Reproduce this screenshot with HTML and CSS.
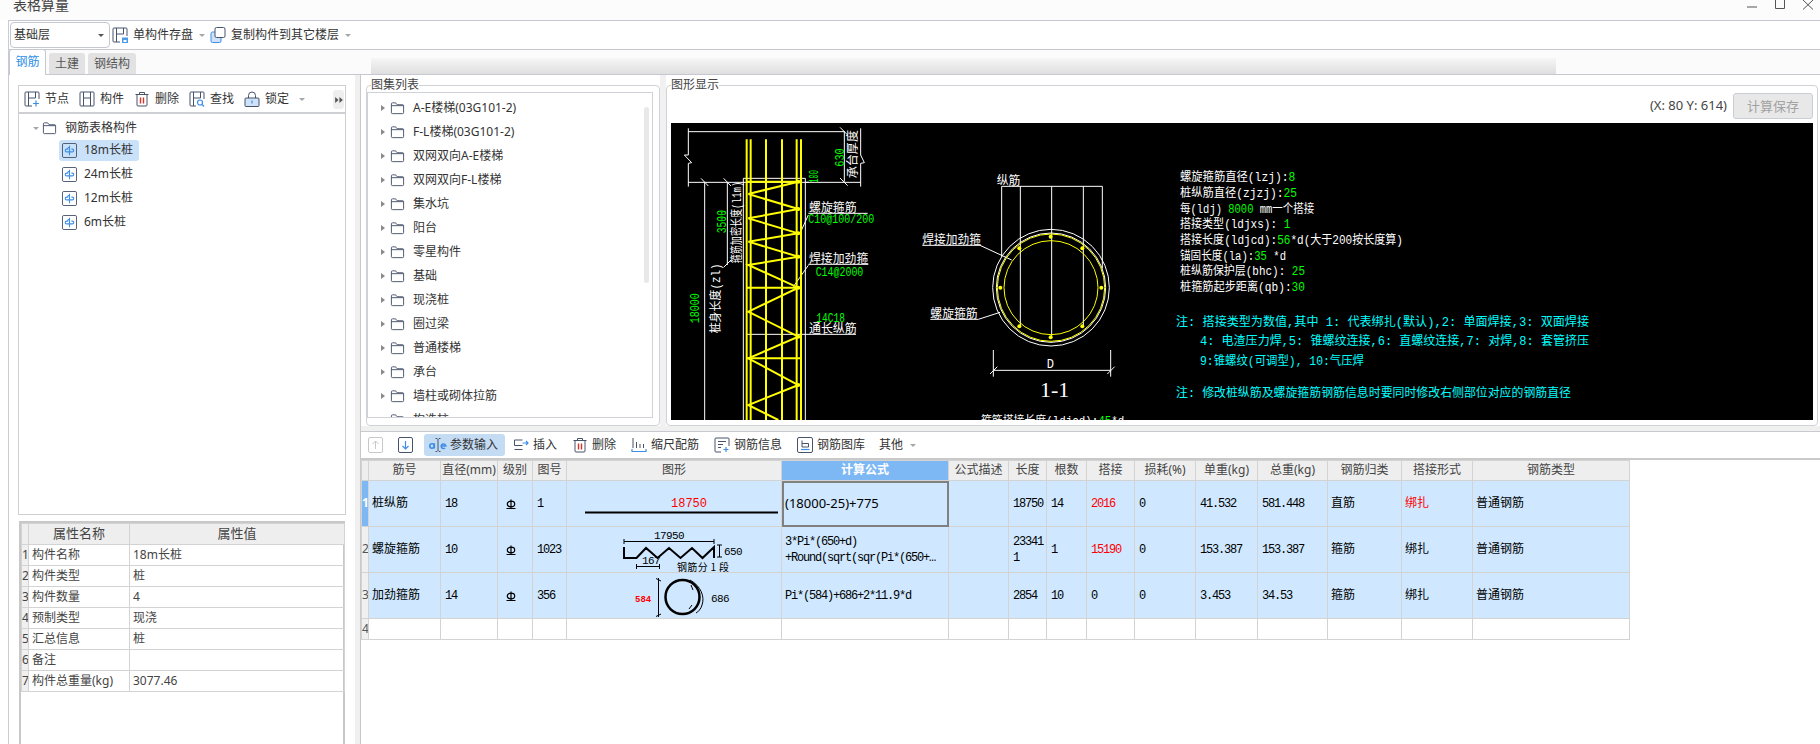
FILE: index.html
```html
<!DOCTYPE html>
<html lang="zh-CN">
<head>
<meta charset="utf-8">
<title>表格算量</title>
<link rel="stylesheet" href="styles.css">
</head>
<body>
<svg class="sprite" aria-hidden="true">
  <symbol id="i-node" viewBox="0 0 16 16"><path class="s" d="M8 15H2a1 1 0 0 1-1-1V2a1 1 0 0 1 1-1h12a1 1 0 0 1 1 1v6M4.500 1v14M11.500 1v6M4.500 7h7"/><path class="b" d="M12 9.500v6M9 12.500h6"/></symbol>
  <symbol id="i-comp" viewBox="0 0 16 16"><rect class="s" x="1" y="1" width="14" height="14" rx="1"/><path class="s" d="M4.500 1v14M11.500 1v14M4.500 7h7"/></symbol>
  <symbol id="i-del" viewBox="0 0 16 16"><path class="s" d="M1.500 3.500h13M5.500 3V1.500h5V3M3 3.500v10.500a1 1 0 0 0 1 1h8a1 1 0 0 0 1-1V3.500"/><path class="r" d="M6.500 6.500v6M9.500 6.500v6"/></symbol>
  <symbol id="i-find" viewBox="0 0 16 16"><path class="s" d="M7 15H2a1 1 0 0 1-1-1V2a1 1 0 0 1 1-1h12a1 1 0 0 1 1 1v6M4.500 1v14M11.500 1v6M4.500 7h7"/><circle class="b" cx="11" cy="11.500" r="2.500"/><path class="b" d="M13 13.500l2 2"/></symbol>
  <symbol id="i-lock" viewBox="0 0 16 16"><path class="s" d="M4.500 7V4.500a3.500 3.500 0 0 1 7 0V7"/><rect x="1" y="7" width="14" height="8.500" rx="1" fill="#cfe2fa" stroke="#47536b"/><path class="b" d="M8 9.500v3"/></symbol>
  <symbol id="i-save" viewBox="0 0 16 16"><path class="s" d="M8 15H2a1 1 0 0 1-1-1V2a1 1 0 0 1 1-1h12a1 1 0 0 1 1 1v7M4.500 1v14M11.500 1v6M4.500 7h7"/><rect x="10" y="10.500" width="6" height="5.500" fill="#4d9be8"/><rect x="11.500" y="13" width="3" height="2" fill="#fff"/></symbol>
  <symbol id="i-copy" viewBox="0 0 16 16"><rect x="1" y="5" width="10" height="10.500" rx="1.500" fill="#cfe2fa" stroke="#3d8ee6"/><rect x="5" y=".5" width="10" height="10" rx="1.500" fill="#fff" stroke="#47536b"/></symbol>
  <symbol id="i-folder" viewBox="0 0 16 14"><path class="s" d="M1.500 12V2.500a1 1 0 0 1 1-1h3.500l1.500 2h6a1 1 0 0 1 1 1V12a1 1 0 0 1-1 1h-11a1 1 0 0 1-1-1zM1.500 4.500h13"/></symbol>
  <symbol id="i-pile" viewBox="0 0 16 16"><rect class="s" x=".5" y=".5" width="15" height="15" rx="1.500"/><path class="b" d="M8 3v10M8 4.500C6.500 4.500 6 5.500 6 6.500H5a1.500 1.500 0 0 0 0 3h6a1.500 1.500 0 0 0 0-3h-1"/></symbol>
  <symbol id="i-up" viewBox="0 0 16 16"><rect x=".5" y=".5" width="14" height="15" rx="1.500" fill="none" stroke="#c8c8c8"/><path d="M7.500 12V4M4.500 7l3-3 3 3" fill="none" stroke="#c8c8c8"/></symbol>
  <symbol id="i-down" viewBox="0 0 16 16"><rect class="s" x=".5" y=".5" width="14" height="15" rx="1.500"/><path class="b" d="M7.500 4v8M4.500 9l3 3 3-3"/></symbol>
  <symbol id="i-param" viewBox="0 0 18 16"><path class="s" d="M6.500 1.500H8l1 1 1-1h1.500M9 2.500v11M6.500 14.500H8l1-1 1 1h1.500"/><circle class="bb" cx="3" cy="9" r="2.200"/><path class="bb" d="M5.300 6.300v5.200"/><path class="bb" d="M12.500 9h4.300a2.300 2.300 0 1 0-.8 2"/></symbol>
  <symbol id="i-insert" viewBox="0 0 16 16"><path class="s" d="M9.500 3H1.500v5.500h8M1.500 12.500h8"/><path class="b" d="M9.500 6h5.500M13 4l2 2-2 2"/></symbol>
  <symbol id="i-scale" viewBox="0 0 16 16"><path class="s" d="M2 1v10M5.500 5v6M9 7v4M12.500 7v4"/><path class="b" d="M1 12v2.500h14V12"/></symbol>
  <symbol id="i-info" viewBox="0 0 16 16"><path class="s" d="M7 15H2a1 1 0 0 1-1-1V2a1 1 0 0 1 1-1h12a1 1 0 0 1 1 1v7M4 4.500h8M4 7.500h5M4 10.500h3"/><path class="b" d="M12 10v5M9.500 12.500h5"/></symbol>
  <symbol id="i-lib" viewBox="0 0 16 16"><rect class="s" x=".5" y=".5" width="15" height="15" rx="1.500"/><path class="s" d="M5 3.500v6.500h6.500V6.500H5"/><path class="b" d="M4 12.500h8.500"/></symbol>
  <symbol id="i-grade" viewBox="0 0 10 10"><path d="M5 .5v8.500M1.300 5a3.700 2.800 0 0 1 7.400 0 3.700 2.800 0 0 1-7.400 0M.5 9.500h9" fill="none" stroke="#000" stroke-width="1.200"/></symbol>
  <symbol id="i-more" viewBox="0 0 9 7"><path d="M0 0l4 3.500L0 7zM5 0l4 3.500L5 7z" fill="#555"/></symbol>
</svg>

<header class="titlebar">
  <span class="title">表格算量</span>
  <div class="winctl">
    <svg class="wbtn" viewBox="0 0 10 10"><path d="M0 7h10"/></svg>
    <svg class="wbtn" viewBox="0 0 10 10"><path d="M.5 0v8.500h9V0"/></svg>
    <svg class="wbtn" viewBox="0 0 10 10"><path d="M0 0l10 9.500M10 0L0 9.500"/></svg>
  </div>
</header>

<div class="shell">
  <div class="topbar">
    <div class="select"><span>基础层</span><i class="caret dark"></i></div>
    <svg class="ico16 ml2"><use href="#i-save"/></svg><span class="tbt ml5">单构件存盘</span><i class="caret ml6"></i>
    <svg class="ico16 ml5"><use href="#i-copy"/></svg><span class="tbt ml5">复制构件到其它楼层</span><i class="caret ml6"></i>
  </div>
  <div class="tabs">
    <span class="tab active">钢筋</span><span class="tab">土建</span><span class="tab">钢结构</span>
  </div>
  <main class="work">
    <section class="left">
      <div class="lefttop">
        <div class="ltools">
          <svg class="ico16"><use href="#i-node"/></svg><span class="tbt tl">节点</span>
          <svg class="ico16"><use href="#i-comp"/></svg><span class="tbt tl">构件</span>
          <svg class="ico16"><use href="#i-del"/></svg><span class="tbt tl">删除</span>
          <svg class="ico16"><use href="#i-find"/></svg><span class="tbt tl">查找</span>
          <svg class="ico16"><use href="#i-lock"/></svg><span class="tbt tl">锁定</span>
          <i class="caret"></i>
          <span class="more"><svg class="more-ico"><use href="#i-more"/></svg></span>
        </div>
        <div class="tree">
          <div class="root"><i class="caret"></i><svg class="folder"><use href="#i-folder"/></svg><span>钢筋表格构件</span></div>
          <div class="leaf sel"><svg class="ico15"><use href="#i-pile"/></svg><span>18m长桩</span></div>
          <div class="leaf"><svg class="ico15"><use href="#i-pile"/></svg><span>24m长桩</span></div>
          <div class="leaf"><svg class="ico15"><use href="#i-pile"/></svg><span>12m长桩</span></div>
          <div class="leaf"><svg class="ico15"><use href="#i-pile"/></svg><span>6m长桩</span></div>
        </div>
      </div>
      <div class="props">
        <table class="ptable">
          <colgroup><col class="pc0"><col class="pc1"><col class="pc2"></colgroup>
          <thead><tr><th></th><th>属性名称</th><th>属性值</th></tr></thead>
          <tbody>
            <tr><td class="n">1</td><td>构件名称</td><td>18m长桩</td></tr>
            <tr><td class="n">2</td><td>构件类型</td><td>桩</td></tr>
            <tr><td class="n">3</td><td>构件数量</td><td>4</td></tr>
            <tr><td class="n">4</td><td>预制类型</td><td>现浇</td></tr>
            <tr><td class="n">5</td><td>汇总信息</td><td>桩</td></tr>
            <tr><td class="n">6</td><td>备注</td><td></td></tr>
            <tr><td class="n">7</td><td>构件总重量(kg)</td><td>3077.46</td></tr>
          </tbody>
        </table>
      </div>
    </section>
    <div class="splitter"></div>
    <section class="right">
      <div class="upper">
        <div class="group g1">
          <span class="legend">图集列表</span>
          <div class="atlas">
            <div class="arow"><i class="tri"></i><svg class="folder"><use href="#i-folder"/></svg><span>A-E楼梯(03G101-2)</span></div>
            <div class="arow"><i class="tri"></i><svg class="folder"><use href="#i-folder"/></svg><span>F-L楼梯(03G101-2)</span></div>
            <div class="arow"><i class="tri"></i><svg class="folder"><use href="#i-folder"/></svg><span>双网双向A-E楼梯</span></div>
            <div class="arow"><i class="tri"></i><svg class="folder"><use href="#i-folder"/></svg><span>双网双向F-L楼梯</span></div>
            <div class="arow"><i class="tri"></i><svg class="folder"><use href="#i-folder"/></svg><span>集水坑</span></div>
            <div class="arow"><i class="tri"></i><svg class="folder"><use href="#i-folder"/></svg><span>阳台</span></div>
            <div class="arow"><i class="tri"></i><svg class="folder"><use href="#i-folder"/></svg><span>零星构件</span></div>
            <div class="arow"><i class="tri"></i><svg class="folder"><use href="#i-folder"/></svg><span>基础</span></div>
            <div class="arow"><i class="tri"></i><svg class="folder"><use href="#i-folder"/></svg><span>现浇桩</span></div>
            <div class="arow"><i class="tri"></i><svg class="folder"><use href="#i-folder"/></svg><span>圈过梁</span></div>
            <div class="arow"><i class="tri"></i><svg class="folder"><use href="#i-folder"/></svg><span>普通楼梯</span></div>
            <div class="arow"><i class="tri"></i><svg class="folder"><use href="#i-folder"/></svg><span>承台</span></div>
            <div class="arow"><i class="tri"></i><svg class="folder"><use href="#i-folder"/></svg><span>墙柱或砌体拉筋</span></div>
            <div class="arow"><i class="tri"></i><svg class="folder"><use href="#i-folder"/></svg><span>构造柱</span></div>
            <div class="scroll"></div>
          </div>
        </div>
        <div class="vsplit"></div>
        <div class="group g2">
          <span class="legend">图形显示</span>
          <div class="ghead"><span class="coord">(X: 80 Y: 614)</span><span class="calc">计算保存</span></div>
          <svg class="cad" viewBox="18 39 3426 891">
            <rect x="18" y="39" width="3426" height="891" fill="#000"/>
            <g class="lw">
              <path d="M70 55V135L58 135 80 158 70 160V230M70 65H540M70 217H587M587 55V135L598 158 587 160V230M538 65V215M525 52L548 75M525 204L548 227"/>
              <path d="M235 930V205H421V930M421 217H432M119 217V930M187 217V465M108 205L130 228M176 205L198 228M176 472L198 450"/>
              <path d="M430 310H608M430 315L405 370M430 463H610M430 466L385 530M245 673H573"/>
              <path d="M772 406H945L1040 450M796 628H940L1005 607M1010 229H1312M1010 229V440M1066 229V650M1160 229V680M1255 229V650M1312 229V475"/>
              <path d="M985 720V800M1337 720V800M985 781H1337M975 792L997 770M1327 792L1349 770"/>
              <circle cx="1158" cy="533" r="175"/>
              <circle cx="1158" cy="533" r="164"/>
            </g>
            <g class="ly">
              <circle cx="1158" cy="533" r="161"/>
              <circle cx="1158" cy="533" r="141"/>
            </g>
            <g class="lyb">
              <path d="M245 88V930M257 88V930M303 88V930M351 88V930M395 88V930M408 88V930"/>
              <path d="M245 215H408M245 533H408M245 745H408"/>
              <path d="M250 252L400 215M250 252L400 297L250 325L400 370L250 395L400 440L250 465L400 533L250 605L400 680L250 745L400 825L250 885L340 930"/>
            </g>
            <g class="dots">
              <circle cx="400" cy="215" r="6"/><circle cx="400" cy="297" r="6"/><circle cx="400" cy="370" r="6"/><circle cx="400" cy="440" r="6"/><circle cx="400" cy="533" r="6"/><circle cx="400" cy="680" r="6"/><circle cx="400" cy="825" r="6"/>
              <circle cx="1157" cy="380" r="6"/><circle cx="1063" cy="415" r="6"/><circle cx="1252" cy="415" r="6"/><circle cx="1006" cy="533" r="6"/><circle cx="1309" cy="533" r="6"/><circle cx="1063" cy="649" r="6"/><circle cx="1252" cy="649" r="6"/><circle cx="1157" cy="682" r="6"/>
            </g>
            <text class="ct g" transform="translate(538 170) rotate(-90)" textLength="55" lengthAdjust="spacingAndGlyphs">630</text>
            <text class="ct w" transform="translate(575 205) rotate(-90)" textLength="145" lengthAdjust="spacingAndGlyphs">承台厚度</text>
            <text class="ct g" transform="translate(458 218) rotate(-90)" textLength="38" lengthAdjust="spacingAndGlyphs">100</text>
            <text class="ct g" transform="translate(184 370) rotate(-90)" textLength="70" lengthAdjust="spacingAndGlyphs">3500</text>
            <text class="ct w" transform="translate(228 460) rotate(-90)" textLength="245" lengthAdjust="spacingAndGlyphs">箍筋加密长度(l1m)</text>
            <text class="ct w" transform="translate(165 670) rotate(-90)" textLength="210" lengthAdjust="spacingAndGlyphs">桩身长度(zl)</text>
            <text class="ct g" transform="translate(103 640) rotate(-90)" textLength="90" lengthAdjust="spacingAndGlyphs">18000</text>
            <text class="ct w" x="432" y="307" textLength="143" lengthAdjust="spacingAndGlyphs">螺旋箍筋</text>
            <text class="ct g" x="430" y="340" textLength="198" lengthAdjust="spacingAndGlyphs">C10@100/200</text>
            <text class="ct w" x="432" y="458" textLength="178" lengthAdjust="spacingAndGlyphs">焊接加劲箍</text>
            <text class="ct g" x="452" y="498" textLength="143" lengthAdjust="spacingAndGlyphs">C14@2000</text>
            <text class="ct g" x="454" y="637" textLength="86" lengthAdjust="spacingAndGlyphs">14C18</text>
            <text class="ct w" x="432" y="670" textLength="143" lengthAdjust="spacingAndGlyphs">通长纵筋</text>
            <text class="ct w" x="995" y="224" textLength="71" lengthAdjust="spacingAndGlyphs">纵筋</text>
            <text class="ct w" x="772" y="402" textLength="176" lengthAdjust="spacingAndGlyphs">焊接加劲箍</text>
            <text class="ct w" x="796" y="624" textLength="142" lengthAdjust="spacingAndGlyphs">螺旋箍筋</text>
            <text class="ct w" x="1145" y="775">D</text>
            <text class="big" x="1125" y="862" textLength="88" lengthAdjust="spacingAndGlyphs">1-1</text>
            <text class="ct w" x="948" y="945" textLength="430" lengthAdjust="spacingAndGlyphs">箍筋搭接长度(ldjcd):<tspan class="g">45</tspan>*d</text>

            <text class="ct w" x="1545" y="213" textLength="346" lengthAdjust="spacingAndGlyphs">螺旋箍筋直径(lzj):<tspan class="g">8</tspan></text>
            <text class="ct w" x="1545" y="261" textLength="351" lengthAdjust="spacingAndGlyphs">桩纵筋直径(zjzj):<tspan class="g">25</tspan></text>
            <text class="ct w" x="1545" y="309" textLength="403" lengthAdjust="spacingAndGlyphs">每(ldj) <tspan class="g">8000</tspan> mm一个搭接</text>
            <text class="ct w" x="1545" y="355" textLength="331" lengthAdjust="spacingAndGlyphs">搭接类型(ldjxs): <tspan class="g">1</tspan></text>
            <text class="ct w" x="1545" y="402" textLength="669" lengthAdjust="spacingAndGlyphs">搭接长度(ldjcd):<tspan class="g">56</tspan>*d(大于200按长度算)</text>
            <text class="ct w" x="1545" y="449" textLength="318" lengthAdjust="spacingAndGlyphs">锚固长度(la):<tspan class="g">35</tspan> *d</text>
            <text class="ct w" x="1545" y="495" textLength="375" lengthAdjust="spacingAndGlyphs">桩纵筋保护层(bhc): <tspan class="g">25</tspan></text>
            <text class="ct w" x="1545" y="544" textLength="375" lengthAdjust="spacingAndGlyphs">桩箍筋起步距离(qb):<tspan class="g">30</tspan></text>
            <text class="ct c" x="1533" y="649" textLength="1239" lengthAdjust="spacingAndGlyphs">注: 搭接类型为数值,其中 1: 代表绑扎(默认),2: 单面焊接,3: 双面焊接</text>
            <text class="ct c" x="1605" y="706" textLength="1167" lengthAdjust="spacingAndGlyphs">4: 电渣压力焊,5: 锥螺纹连接,6: 直螺纹连接,7: 对焊,8: 套管挤压</text>
            <text class="ct c" x="1605" y="765" textLength="492" lengthAdjust="spacingAndGlyphs">9:锥螺纹(可调型), 10:气压焊</text>
            <text class="ct c" x="1533" y="860" textLength="1185" lengthAdjust="spacingAndGlyphs">注: 修改桩纵筋及螺旋箍筋钢筋信息时要同时修改右侧部位对应的钢筋直径</text>
          </svg>
        </div>
      </div>
      <div class="lower">
        <div class="btools">
          <svg class="ico16"><use href="#i-up"/></svg>
          <svg class="ico16 b-down"><use href="#i-down"/></svg>
          <span class="tool on"><svg class="ico-param"><use href="#i-param"/></svg><span class="tbt">参数输入</span></span>
          <span class="tool"><svg class="ico16"><use href="#i-insert"/></svg><span class="tbt">插入</span></span>
          <span class="tool"><svg class="ico16"><use href="#i-del"/></svg><span class="tbt">删除</span></span>
          <span class="tool"><svg class="ico16"><use href="#i-scale"/></svg><span class="tbt">缩尺配筋</span></span>
          <span class="tool"><svg class="ico16"><use href="#i-info"/></svg><span class="tbt">钢筋信息</span></span>
          <span class="tool"><svg class="ico16"><use href="#i-lib"/></svg><span class="tbt">钢筋图库</span></span>
          <span class="tool other"><span class="tbt">其他</span><i class="caret"></i></span>
        </div>
        <table class="rebar">
          <colgroup>
            <col class="c7"><col class="c72"><col class="c57"><col class="c35"><col class="c34"><col class="c215"><col class="c167"><col class="c60"><col class="c38"><col class="c40"><col class="c48"><col class="c61"><col class="c62"><col class="c70"><col class="c74"><col class="c71"><col class="c157">
          </colgroup>
          <thead>
            <tr><th></th><th>筋号</th><th>直径(mm)</th><th>级别</th><th>图号</th><th>图形</th><th class="hot">计算公式</th><th>公式描述</th><th>长度</th><th>根数</th><th>搭接</th><th>损耗(%)</th><th>单重(kg)</th><th>总重(kg)</th><th>钢筋归类</th><th>搭接形式</th><th>钢筋类型</th></tr>
          </thead>
          <tbody>
            <tr class="fill">
              <td class="n hotn">1</td><td>桩纵筋</td><td class="m">18</td><td><svg class="grade"><use href="#i-grade"/></svg></td><td class="m">1</td>
              <td class="shape"><svg class="shp" viewBox="0 0 214 45"><text class="sv red" x="122" y="26" text-anchor="middle">18750</text><path d="M18 31.500H211" stroke="#000" stroke-width="2"/></svg></td>
              <td class="formula cur">(18000-25)+775</td><td></td><td class="m">18750</td><td class="m">14</td><td class="m redt">2016</td><td class="m">0</td><td class="m">41.532</td><td class="m">581.448</td><td>直筋</td><td class="redt">绑扎</td><td>普通钢筋</td>
            </tr>
            <tr class="fill">
              <td class="n">2</td><td>螺旋箍筋</td><td class="m">10</td><td><svg class="grade"><use href="#i-grade"/></svg></td><td class="m">1023</td>
              <td class="shape"><svg class="shp" viewBox="0 0 214 45">
                <path d="M57 20V31L69.500 31 79 21 90.500 31 102 21 113.500 31 125 21 135.500 31 147 20V31" fill="none" stroke="#000" stroke-width="2"/>
                <path d="M57 12V17M57 14.500H147M147 12V17M152.500 18V30M150 18H155M150 30H155M69.500 37V42M92.500 37V42M69.500 39.500H92.500" fill="none" stroke="#000"/>
                <text class="sv" x="102" y="12" text-anchor="middle">17950</text>
                <text class="sv" x="157" y="28">650</text>
                <text class="sv" x="75" y="37">167</text>
                <text class="sv cj" x="110" y="44" textLength="52">钢筋分 1 段</text>
              </svg></td>
              <td class="formula mono2">3*Pi*(650+d)<br>+Round(sqrt(sqr(Pi*(650+…</td><td></td><td class="m">233411</td><td class="m">1</td><td class="m redt">15190</td><td class="m">0</td><td class="m">153.387</td><td class="m">153.387</td><td>箍筋</td><td>绑扎</td><td>普通钢筋</td>
            </tr>
            <tr class="fill">
              <td class="n">3</td><td>加劲箍筋</td><td class="m">14</td><td><svg class="grade"><use href="#i-grade"/></svg></td><td class="m">356</td>
              <td class="shape"><svg class="shp" viewBox="0 0 214 45">
                <text class="sv red bold" x="68" y="29">584</text>
                <path d="M91.500 5V44M89 5.500L94 8M89 43.500L94 41" fill="none" stroke="#000"/>
                <circle cx="115.500" cy="24" r="17" fill="none" stroke="#000" stroke-width="2.500"/>
                <path d="M123 7C134 13 138 24 135 32 134 36 131 39 129 40M124 12L126 17M122 36L125 32" fill="none" stroke="#000"/>
                <text class="sv" x="144" y="29">686</text>
              </svg></td>
              <td class="formula mono2">Pi*(584)+686+2*11.9*d</td><td></td><td class="m">2854</td><td class="m">10</td><td class="m">0</td><td class="m">0</td><td class="m">3.453</td><td class="m">34.53</td><td>箍筋</td><td>绑扎</td><td>普通钢筋</td>
            </tr>
            <tr class="blank">
              <td class="n">4</td><td></td><td></td><td></td><td></td><td></td><td></td><td></td><td></td><td></td><td></td><td></td><td></td><td></td><td></td><td></td><td></td>
            </tr>
          </tbody>
        </table>
      </div>
    </section>
  </main>
</div>
</body>
</html>
```

FILE: styles.css
```css
* { box-sizing: border-box; }
html, body { margin: 0; height: 744px; overflow: hidden; background: #fff; }
body { width: 1820px; font: 12px/1.2 "Noto Sans", "Noto Sans CJK SC", sans-serif; color: #333; }
.sprite { display: none; }
svg { display: block; flex: none; }
.s { fill: none; stroke: #47536b; stroke-width: 1; }
.b { fill: none; stroke: #3d8ee6; stroke-width: 1.200; }
.bb { fill: none; stroke: #3d8ee6; stroke-width: 1.600; }
.r { fill: none; stroke: #d9342b; stroke-width: 1.400; }
.ico16 { width: 16px; height: 16px; }
.ico15 { width: 15px; height: 15px; }
.ml2 { margin-left: 2px; }
.ml5 { margin-left: 5px; }
.ml6 { margin-left: 6px; }
.tbt { font-size: 12px; color: #333; white-space: nowrap; }
.caret { display: block; flex: none; width: 0; height: 0; border: 3px solid transparent; border-top: 3.500px solid #a6a6a6; border-bottom: 0; }
.caret.dark { border-top-color: #555; }

.titlebar { height: 20px; display: flex; justify-content: space-between; padding-left: 13px; overflow: hidden; background: #fcfcfc; }
.title { font-size: 14px; line-height: 10px; color: #444; }
.winctl { display: flex; gap: 18px; padding-right: 7px; }
.wbtn { width: 10px; height: 10px; fill: none; stroke: #555; stroke-width: 1; }

.shell { margin-left: 8px; border-left: 1px solid #c9ccd3; height: 724px; display: flex; flex-direction: column; }
.topbar { height: 30px; border-top: 1px solid #c5c8d0; border-bottom: 1px solid #c5c8d0; display: flex; align-items: center; padding-left: 1px; background: #fff; }
.select { width: 100px; height: 26px; border: 1px solid #c5c8d0; border-radius: 4px; display: flex; align-items: center; justify-content: space-between; padding: 0 5px 0 3px; font-size: 12px; }

.tabs { height: 25px; display: flex; align-items: flex-end; background: #fbfbfb; border-bottom: 1px solid #c5c8d0; gap: 3px; position: relative; }
.tabs::after { content: ""; position: absolute; left: 362px; bottom: 0; width: 1185px; height: 16px; background: linear-gradient(#f6f6f6, #dfdfdf); }
.tab { height: 21px; padding: 0 6px; background: #e2e2e2; border-radius: 3px 3px 0 0; line-height: 21px; color: #555; font-size: 12px; white-space: nowrap; }
.tab.active { height: 26px; width: 37px; padding: 0; text-align: center; line-height: 24px; background: #fff; border: 1px solid #c5c8d0; border-bottom: 0; color: #2e8fe8; margin-bottom: -1px; position: relative; z-index: 1; }

.work { flex: 1; display: flex; min-height: 0; background: #fff; }
.left { width: 328px; margin: 10px 0 0 9px; display: flex; flex-direction: column; gap: 6px; min-height: 0; }
.lefttop { height: 430px; border: 1px solid #cfcfcf; display: flex; flex-direction: column; }
.ltools { height: 28px; flex: none; display: flex; align-items: center; padding: 0 1px 0 5px; border-bottom: 2px solid #cfd0d4; position: relative; }
.ltools .ico16 { margin-right: 5px; }
.tl { margin-right: 10px; }
.more { position: absolute; left: 314px; top: 4px; width: 11px; height: 19px; background: #eee; border-radius: 3px; display: flex; align-items: center; justify-content: center; }
.more-ico { width: 8px; height: 6px; }
.tree { flex: 1; padding-top: 2px; }
.root { height: 24px; display: flex; align-items: center; padding-left: 14px; }
.root .caret { margin-top: 1px; }
.folder { width: 15px; height: 14px; margin-left: 3px; }
.root span { margin-left: 8px; }
.leaf { height: 21px; width: 80px; margin: 0 0 3px 40px; display: flex; align-items: center; padding-left: 3px; border-radius: 3px; gap: 7px; font-size: 12px; }
.leaf.sel { background: #c9e1f9; }

.props { flex: 1; min-height: 0; margin: 0 1px; border: 2px solid #c8c8c8; border-width: 2px 2px 0 2px; }
.ptable { border-collapse: collapse; table-layout: fixed; width: 324px; }
.pc0 { width: 7px; }
.pc1 { width: 101px; }
.pc2 { width: 215px; }
.ptable th, .ptable td { height: 21px; border: 1px solid #d3d3d3; padding: 0 3px; font-weight: normal; font-size: 12px; white-space: nowrap; overflow: hidden; color: #444; }
.ptable th { background: #eee; font-size: 13px; }
.n { background: #f0f0f0; color: #555; padding: 0 !important; text-align: center; font-size: 12px; }

.splitter { width: 14px; background: linear-gradient(90deg, #fff 65%, #f0f0f0 65%); flex: none; }
.right { flex: 1; min-width: 0; display: flex; flex-direction: column; background: #f0f0f0; border-left: 1px solid #c9c9c9; }
.upper { height: 351px; flex: none; padding: 10px 2px 0 5px; display: flex; background: #fff; }
.vsplit { width: 6px; flex: none; margin-top: -10px; background: #f1f1f1; }
.group { position: relative; height: 341px; background: #fff; border: 1px solid #cfd2d6; border-radius: 4px; }
.g1 { width: 294px; padding: 6px 6px 0 0; }
.g2 { flex: 1; min-width: 0; padding: 0 4px 0 4px; }
.legend { position: absolute; left: 4px; top: -9px; background: #fff; padding: 0; line-height: 16px; font-size: 12px; color: #444; }
.atlas { height: 326px; overflow: hidden; border: 1px solid #cfd2d6; position: relative; padding-top: 3px; }
.arow { height: 24px; display: flex; align-items: center; padding-left: 13px; flex: none; }
.arow span { margin-left: 8px; }
.tri { display: block; flex: none; width: 0; height: 0; border: 3.500px solid transparent; border-left: 4px solid #8a8a8a; border-right: 0; }
.arow .folder { margin-left: 5px; }
.scroll { position: absolute; left: 276px; top: 14px; width: 5px; height: 176px; background: #e8e8e8; border-radius: 3px; }
.ghead { height: 37px; display: flex; justify-content: flex-end; align-items: center; gap: 6px; padding-top: 2px; }
.coord { font-size: 13px; color: #444; }
.calc { width: 80px; height: 26px; margin-top: 1px; border: 1px solid #c8cdd6; border-radius: 3px; background: #e8e8e8; color: #a2a2a2; font-size: 13px; line-height: 24px; text-align: center; }
.cad { width: 1142px; height: 297px; background: #000; }
.lw path, .lw circle { fill: none; stroke: #fff; stroke-width: 3; }
.ly circle { fill: none; stroke: #ff0; stroke-width: 3; }
.lyb path { fill: none; stroke: #ff0; stroke-width: 6; }
.dots circle { fill: #ff0; }
.ct { font: 36px "Liberation Mono", "Noto Sans CJK SC", monospace; fill: #fff; }
.ct.w, .ct .w { fill: #fff; }
.ct.g, .ct .g { fill: #0f0; }
.ct.c { fill: #0ff; }
.big { font: 60px "Liberation Serif", serif; fill: #fff; }

.lower { flex: 1; margin-top: 5px; background: #fff; border-top: 1px solid #c9c9d0; min-height: 0; }
.btools { height: 28px; display: flex; align-items: center; padding-left: 7px; border-bottom: 2px solid #c9c9c9; }
.b-down { margin-left: 14px; }
.tool { height: 22px; display: flex; align-items: center; gap: 4px; margin-left: 15px; }
.tool .caret { margin-left: 3px; }
.tool.on { background: #c4dcf3; margin-left: 10px; padding: 0 7px 0 5px; border-radius: 3px; gap: 3px; }
.tool.on + .tool { margin-left: 8px; }
.tool.other { margin-left: 14px; }
.ico-param { width: 18px; height: 16px; }

.rebar { border-collapse: collapse; table-layout: fixed; width: 1268px; }
.c7 { width: 7px; } .c72 { width: 72px; } .c57 { width: 57px; } .c35 { width: 35px; } .c34 { width: 34px; } .c215 { width: 215px; } .c167 { width: 167px; } .c60 { width: 60px; } .c38 { width: 38px; } .c40 { width: 40px; } .c48 { width: 48px; } .c61 { width: 61px; } .c62 { width: 62px; } .c70 { width: 70px; } .c74 { width: 74px; } .c71 { width: 71px; } .c157 { width: 157px; }
.rebar th, .rebar td { border: 1px solid #d3d3d3; padding: 0 3px; font-weight: normal; font-size: 12px; overflow: hidden; color: #000; }
.rebar th { height: 20px; background: #eee; color: #444; white-space: nowrap; text-align: center; padding: 0; }
.rebar th.hot { background: #7db8f5; color: #fff; font-weight: 700; }
.rebar .fill td { height: 46px; background: #cfe8ff; }
.rebar .blank td { height: 21px; }
.rebar td.n { background: #f0f0f0; color: #555; }
.rebar td.hotn { background: #7db8f5; color: #fff; font-weight: 700; }
.rebar td.m { font: 12px/16px "Liberation Mono", monospace; letter-spacing: -1.200px; word-break: break-all; padding: 0 2px 0 4px; }
.rebar td.redt { color: #f00; }
.grade { width: 10px; height: 10px; margin-left: 5px; }
.rebar td.shape { padding: 0; }
.shp { width: 214px; height: 45px; }
.sv { font: 11px "Liberation Mono", monospace; fill: #000; letter-spacing: -.6px; }
.sv.red { fill: #f00; font-size: 12px; letter-spacing: 0; }
.sv.bold { font-weight: 700; font-size: 9px; }
.sv.cj { font: 10px "Noto Sans CJK SC", sans-serif; letter-spacing: 0; }
.rebar td.formula { font-size: 13px; white-space: nowrap; }
.rebar td.cur { outline: 2px solid #808080; outline-offset: -2px; }
.rebar td.mono2 { font: 12px/16px "Liberation Mono", monospace; letter-spacing: -1.200px; }
```
